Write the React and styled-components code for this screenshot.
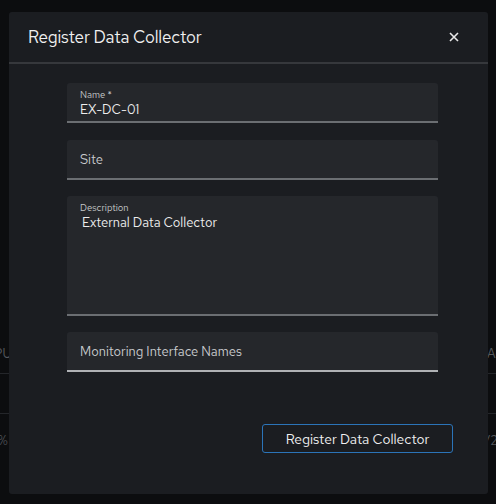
import React from 'react'
import styled, {createGlobalStyle} from 'styled-components';

const Global = createGlobalStyle`
  html, body {
    margin: 0;
    padding: 0;
    background: #0c0d0f;
    font-family: "Red Hat Text", "Noto Sans", "Liberation Sans", sans-serif;
  }
`;

const Page = styled.div`
    position: relative;
    width: 496px;
    height: 504px;
    overflow: hidden;
    background: #0c0d0f;
`;

const BgTable = styled.div`
    padding-top: 334px;
    display: flex;
    flex-direction: column;
`;

const BgRow = styled.div`
    height: ${p => p.h}px;
    border-bottom: ${p => p.line ? '1px solid #24262a' : 'none'};
    display: flex;
    align-items: center;
    justify-content: space-between;
    font-size: 13px;
    color: #55585d;
    margin: 0 -${p => p.out || 0}px;
`;

const Overlay = styled.div`
    position: absolute;
    inset: 0;
    padding: 12px 8px 10px 9px;
    display: flex;
`;

const Modal = styled.div`
    flex: 1;
    background: #1b1d21;
    border-radius: 3px;
    display: flex;
    flex-direction: column;
`;

const Header = styled.div`
    height: 50px;
    border-bottom: 2px solid #36383c;
    display: flex;
    align-items: center;
    justify-content: space-between;
    padding: 0 29px 0 19px;
`;

const Title = styled.h1`
    margin: 0;
    font-size: 17px;
    font-weight: 400;
    color: #f0f0f0;
    letter-spacing: -0.15px;
`;

const Close = styled.button`
    background: none;
    border: none;
    padding: 0;
    color: #e8e8e8;
    display: flex;
    cursor: pointer;
`;

const Body = styled.div`
    padding: 19px 50px 0 58px;
    display: flex;
    flex-direction: column;
    gap: 16px;
`;

const Field = styled.div`
    height: ${p => p.h}px;
    margin-bottom: ${p => p.mb || 0}px;
    background: #25272b;
    border-radius: 3px 3px 0 0;
    border-bottom: 2px solid ${p => p.active ? '#b0b2b5' : '#6b6e72'};
    padding: ${p => p.label ? '6px' : '0'} 13px 0;
    display: flex;
    flex-direction: column;
    justify-content: ${p => p.label ? 'flex-start' : 'center'};
    box-sizing: border-box;
`;

const Label = styled.div`
    font-size: 9.5px;
    color: #c5c7ca;
    line-height: 12px;
`;

const Value = styled.div`
    font-size: 13px;
    color: ${p => p.placeholder ? '#c9cbce' : '#eeeeee'};
    line-height: 17px;
    padding-left: ${p => p.indent || 0}px;
`;

const Footer = styled.div`
    display: flex;
    justify-content: flex-end;
    padding: 52px 35px 0 0;
`;

const Button = styled.button`
    width: 191px;
    height: 29px;
    background: transparent;
    border: 1px solid #2b74b8;
    border-radius: 3px;
    color: #f0f0f0;
    font-family: inherit;
    font-size: 13.8px;
    cursor: pointer;
`;

const App = () => {
    return (
        <>
          <Global />
          <Page>
              <BgTable>
                  <BgRow h={39} line out={6}><span>PU</span><span>Ac</span></BgRow>
                  <BgRow h={39} line />
                  <BgRow h={52} out={2}><span>%</span><span>/2</span></BgRow>
              </BgTable>
              <Overlay>
                  <Modal>
                      <Header>
                          <Title>Register Data Collector</Title>
                          <Close aria-label="Close">
                              <svg width="10" height="10" viewBox="0 0 10 10">
                                  <path d="M1 1L9 9M9 1L1 9" stroke="currentColor" strokeWidth="1.6" />
                              </svg>
                          </Close>
                      </Header>
                      <Body>
                          <Field h={40} mb={1} label>
                              <Label>Name *</Label>
                              <Value>EX-DC-01</Value>
                          </Field>
                          <Field h={40}>
                              <Value placeholder>Site</Value>
                          </Field>
                          <Field h={120} label>
                              <Label>Description</Label>
                              <Value indent={2}>External Data Collector</Value>
                          </Field>
                          <Field h={40} active>
                              <Value placeholder>Monitoring Interface Names</Value>
                          </Field>
                      </Body>
                      <Footer>
                          <Button>Register Data Collector</Button>
                      </Footer>
                  </Modal>
              </Overlay>
          </Page>
        </>
    )
}

export default App;
